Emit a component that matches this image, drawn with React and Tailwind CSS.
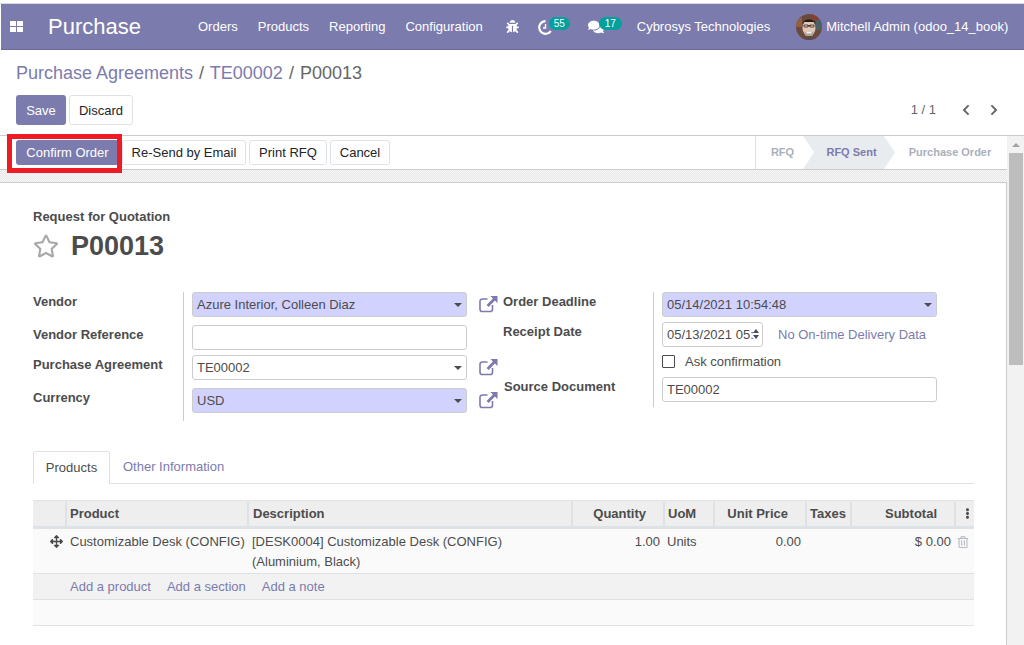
import React from "react";
import {
  FaBug,
  FaChevronLeft,
  FaChevronRight,
  FaComments,
  FaArrowsAlt,
  FaEllipsisV,
  FaRegStar,
  FaRegTrashAlt,
} from "react-icons/fa";

const ExternalLink = () => (
  <svg width="19" height="18" viewBox="0 0 19 18" fill="none" className="text-[#7c7bad]">
    <path d="M13.5 10v4.2a2.3 2.3 0 0 1-2.3 2.3H3.3A2.3 2.3 0 0 1 1 14.2V6.3A2.3 2.3 0 0 1 3.3 4h5.2" stroke="currentColor" strokeWidth="1.6" />
    <path d="M11.5 1H18.5V8L15.9 5.6 9.6 11.9 7.6 9.9 13.9 3.6Z" fill="currentColor" />
  </svg>
);

const Caret = () => (
  <span className="ml-auto border-x-[4px] border-t-[4px] border-x-transparent border-t-[#4c4c4c]" />
);

const Avatar = () => (
  <svg width="26" height="26" viewBox="0 0 26 26" className="rounded-full">
    <rect width="26" height="26" fill="#6b4a3c" />
    <rect x="0" y="4" width="6" height="9" fill="#94603f" />
    <rect x="20" y="6" width="6" height="10" fill="#4d6066" />
    <rect x="16" y="0" width="8" height="5" fill="#8a3f30" />
    <ellipse cx="13" cy="14" rx="6.5" ry="8" fill="#e2c8b6" />
    <path d="M6.5 10C7 4 19 4 19.5 10L18 8H8Z" fill="#221a18" />
    <path d="M8 11H12V13H8ZM14 11H18V13H14ZM12 11.5H14V12H12Z" fill="none" stroke="#3a2d2a" strokeWidth="0.8" />
    <path d="M8 17C10 19 16 19 18 17L16.5 22H9.5Z" fill="#b0a49c" />
    <path d="M10.5 18H15.5V19.5H10.5Z" fill="#f6eee8" />
    <path d="M3 26C5 22 21 22 23 26Z" fill="#5a4a4a" />
  </svg>
);

const Field = ({ value, highlight, caret, className = "w-[275px]" }) => (
  <div
    className={`flex h-[25px] items-center rounded-[3px] border border-[#ccc] px-1 pt-px ${className} ${
      highlight ? "bg-[#d2d2ff]" : "bg-white"
    }`}
  >
    <span className="whitespace-nowrap">{value}</span>
    {caret && <Caret />}
  </div>
);

const headers = [
  { label: "", className: "" },
  { label: "Product", className: "pl-[3px]" },
  { label: "Description", className: "pl-[4px]" },
  { label: "Quantity", className: "justify-end pr-[17px]" },
  { label: "UoM", className: "pl-[3px]" },
  { label: "Unit Price", className: "justify-end pr-[17px]" },
  { label: "Taxes", className: "pl-[3px]" },
  { label: "Subtotal", className: "justify-end pr-[17px]" },
];

const App = () => {
  return (
    <div className="relative flex h-[645px] w-full flex-col overflow-hidden bg-white font-['Liberation_Sans',sans-serif] text-[13px] text-[#4c4c4c]">
      {/* Top bar */}
      <div className="h-[4px] border-b border-[#d8d8d8] bg-white" />
      <nav className="ml-px flex h-[46px] items-center border-b border-[#6b6a9c] bg-[#7c7bad] text-white">
        <div className="ml-[9px] grid h-[11px] w-[13px] grid-cols-2 gap-px">
          <span className="bg-white" />
          <span className="bg-white" />
          <span className="bg-white" />
          <span className="bg-white" />
        </div>
        <span className="ml-[25px] w-[93px] whitespace-nowrap text-[22px]">Purchase</span>
        <div className="ml-[57px] flex gap-[20px] whitespace-nowrap">
          <span>Orders</span>
          <span>Products</span>
          <span>Reporting</span>
          <span>Configuration</span>
        </div>
        <FaBug className="ml-[23px] size-[13px]" />
        {/* Activities */}
        <div className="relative ml-[19px] h-[16px] w-[32px]">
          <svg width="15" height="15" viewBox="0 0 15 15" fill="none" className="mt-px">
            <path d="M12.8 11A6.3 6.3 0 1 1 7.5 1.2" stroke="white" strokeWidth="2.2" />
            <path d="M7.5 4v4H5" stroke="white" strokeWidth="1.4" />
          </svg>
          <span className="absolute -top-[2px] left-[11px] flex h-[13px] w-[21px] items-center justify-center rounded-full bg-[#00a09d] text-[10px]">
            55
          </span>
        </div>
        {/* Messages */}
        <div className="relative ml-[18px] h-[16px] w-[34px]">
          <FaComments className="size-[16px]" />
          <span className="absolute -top-[2px] left-[11px] flex h-[13px] w-[23px] items-center justify-center rounded-full bg-[#00a09d] text-[10px]">
            17
          </span>
        </div>
        <span className="ml-[15px] whitespace-nowrap">Cybrosys Technologies</span>
        <span className="ml-[26px]">
          <Avatar />
        </span>
        <span className="ml-[4px] whitespace-nowrap">Mitchell Admin (odoo_14_book)</span>
      </nav>

      {/* Control panel */}
      <div className="h-[85px] px-[16px] pt-[11px]">
        <div className="h-[24px] text-[18px] leading-[24px] text-[#7c7bad]">
          Purchase Agreements <span className="mx-[1px] text-[#666]">/</span> TE00002{" "}
          <span className="mx-[1px] text-[#666]">/</span> <span className="text-[#666]">P00013</span>
        </div>
        <div className="mt-[10px] flex items-center">
          <button className="h-[30px] w-[50px] rounded-[3px] bg-[#7c7bad] pt-px text-white">Save</button>
          <button className="ml-[3px] h-[30px] w-[64px] rounded-[3px] border border-[#dee2e6] pt-px text-[#212529]">
            Discard
          </button>
          <span className="ml-auto text-[#666]">1 / 1</span>
          <FaChevronLeft className="ml-[24px] size-[12px] text-[#666]" />
          <FaChevronRight className="ml-[16px] mr-[8px] size-[12px] text-[#666]" />
        </div>
      </div>

      <div className="flex min-h-0 flex-1 border-t border-[#ccc]">
        <div className="flex min-w-0 flex-1 flex-col">
          {/* Status bar */}
          <div className="flex h-[34px] items-center border-b border-[#ccc] bg-white text-[#212529]">
            <div className="ml-[16px] flex gap-[3px]">
              <button className="flex h-[25px] w-[103px] items-center justify-center rounded-[3px] bg-[#7c7bad] text-white">
                Confirm Order
              </button>
              <button className="h-[25px] w-[124px] rounded-[3px] border border-[#dee2e6]">Re-Send by Email</button>
              <button className="h-[25px] w-[78px] rounded-[3px] border border-[#dee2e6]">Print RFQ</button>
              <button className="h-[25px] w-[60px] rounded-[3px] border border-[#dee2e6]">Cancel</button>
            </div>
            <div className="ml-auto flex h-full items-center border-l border-[#dee2e6] text-[11px] font-bold text-[#aab0bb]">
              <span className="w-[47px] pl-[6px] text-center">RFQ</span>
              <span className="flex h-full w-[92px] items-center justify-center bg-[#e9ecef] pl-[8px] pr-[3px] text-[#7c7bad] [clip-path:polygon(0_0,81px_0,92px_50%,81px_100%,0_100%,11px_50%)]">
                RFQ Sent
              </span>
              <span className="w-[112px] pr-[2px] text-center whitespace-nowrap">Purchase Order</span>
            </div>
          </div>

          {/* Dotted ribbon above the sheet */}
          <div className="h-[12px] bg-[repeating-conic-gradient(#e8e8e8_0_25%,#f6f6f6_0_50%)] bg-[length:2px_2px]" />

          {/* Sheet */}
          <div className="flex-1 border-r border-t border-[#ccc] pl-[33px] pr-[32px]">
            <div className="mt-[24px] font-bold">Request for Quotation</div>
            <div className="mt-[1px] flex items-center">
              <FaRegStar className="size-[26px] text-[#a9a9a9]" />
              <h1 className="ml-[12px] pt-px text-[27px] font-bold leading-[35px]">P00013</h1>
            </div>

            <div className="mt-[28px] flex h-[129px]">
              {/* Left group */}
              <div className="grid w-[150px] grid-rows-[33px_30px_33px_30px] font-bold">
                <span>Vendor</span>
                <span>Vendor Reference</span>
                <span>Purchase Agreement</span>
                <span>Currency</span>
              </div>
              <div className="flex w-[320px] flex-col border-l border-[#ccc] pl-[8px]">
                <div className="flex items-center">
                  <Field value="Azure Interior, Colleen Diaz" highlight caret />
                  <span className="ml-[12px]">
                    <ExternalLink />
                  </span>
                </div>
                <div className="mt-[8px]">
                  <Field value="" />
                </div>
                <div className="mt-[5px] flex items-center">
                  <Field value="TE00002" caret />
                  <span className="ml-[12px]">
                    <ExternalLink />
                  </span>
                </div>
                <div className="mt-[8px] flex items-center">
                  <Field value="USD" highlight caret />
                  <span className="ml-[12px]">
                    <ExternalLink />
                  </span>
                </div>
              </div>

              {/* Right group */}
              <div className="grid w-[150px] grid-rows-[30px_55px_30px] font-bold">
                <span>Order Deadline</span>
                <span>Receipt Date</span>
                <span className="ml-px">Source Document</span>
              </div>
              <div className="flex h-[115px] flex-col border-l border-[#ccc] pl-[8px]">
                <Field value="05/14/2021 10:54:48" highlight caret />
                <div className="mt-[5px] flex items-center">
                  <div className="relative flex h-[25px] w-[101px] items-center overflow-hidden rounded-[3px] border border-[#ccc] px-1 pt-px">
                    <span className="whitespace-nowrap">05/13/2021 05:</span>
                    <span className="absolute right-[3px] top-[6px] border-x-[3px] border-b-[4px] border-x-transparent border-b-[#4c4c4c]" />
                    <span className="absolute right-[3px] top-[12px] border-x-[3px] border-t-[4px] border-x-transparent border-t-[#4c4c4c]" />
                  </div>
                  <span className="ml-[15px] pt-px text-[#7c7bad]">No On-time Delivery Data</span>
                </div>
                <div className="mt-[8px] flex h-[14px] items-center">
                  <span className="size-[13px] rounded-[1px] border border-[#4c4c4c]" />
                  <span className="ml-[10px]">Ask confirmation</span>
                </div>
                <div className="mt-[8px]">
                  <Field value="TE00002" />
                </div>
              </div>
            </div>

            {/* Tabs */}
            <div className="mt-[30px] flex h-[33px] border-b border-[#dee2e6]">
              <div className="flex h-[33px] w-[77px] items-center justify-center rounded-t-[3px] border border-b-0 border-[#dee2e6] bg-white">
                Products
              </div>
              <div className="ml-[13px] flex items-center pt-px text-[#7c7bad]">Other Information</div>
            </div>

            {/* Order lines */}
            <div className="mt-[16px] w-[941px]">
              <div className="grid h-[29px] grid-cols-[34px_182px_324px_92px_50px_92px_45px_104px_18px] border-y border-t-[#dee2e6] border-b-[#dee2e6] bg-[#eeeeee] pt-px font-bold [border-bottom-width:3px]">
                {headers.map((h) => (
                  <div
                    key={h.label || "handle"}
                    className={`flex items-center border-r-2 border-[#dee2e6] ${h.className}`}
                  >
                    {h.label}
                  </div>
                ))}
                <div className="flex items-center justify-center pl-[4px]">
                  <FaEllipsisV className="size-[11px]" />
                </div>
              </div>

              <div className="grid h-[45px] grid-cols-[34px_182px_324px_92px_50px_92px_45px_104px_18px] border-b border-[#dee2e6] bg-[#fafafa] pt-[3px] leading-[20px]">
                <div className="flex h-[20px] justify-center pl-[12px]">
                  <FaArrowsAlt className="mt-[3px] size-[13px]" />
                </div>
                <div className="whitespace-nowrap pl-[3px]">Customizable Desk (CONFIG)</div>
                <div className="pl-[3px]">
                  [DESK0004] Customizable Desk (CONFIG)
                  <br />
                  (Aluminium, Black)
                </div>
                <div className="pr-[5px] text-right">1.00</div>
                <div className="pl-[2px]">Units</div>
                <div className="pr-[6px] text-right">0.00</div>
                <div />
                <div className="pr-[5px] text-right">$ 0.00</div>
                <div className="flex h-[20px] items-center justify-center pr-[4px]">
                  <FaRegTrashAlt className="size-[12px] text-[#b8bcc4]" />
                </div>
              </div>

              <div className="flex h-[26px] items-center gap-[16px] border-b border-[#dee2e6] bg-[repeating-conic-gradient(#efefef_0_25%,#f4f4f4_0_50%)] bg-[length:2px_2px] pl-[37px] pt-px text-[#7c7bad]">
                <span>Add a product</span>
                <span>Add a section</span>
                <span>Add a note</span>
              </div>
              <div className="h-[26px] border-b border-[#dee2e6] bg-[#fafafa]" />
            </div>
          </div>
        </div>

        {/* Scrollbar */}
        <div className="flex w-[17px] flex-col items-center bg-[repeating-conic-gradient(#efefef_0_25%,#f5f5f5_0_50%)] bg-[length:2px_2px]">
          <span className="mt-[7px] border-x-[4px] border-b-[4px] border-x-transparent border-b-[#a3a3a3]" />
          <span className="mt-[6px] h-[212px] w-[14px] bg-[#bdbdbd]" />
        </div>
      </div>

      {/* Red highlight drawn over the Confirm Order button */}
      <div className="pointer-events-none absolute left-[7px] top-[134px] h-[39px] w-[115px] border-[5px] border-[#ed1c24]" />
    </div>
  );
};

export default App;
